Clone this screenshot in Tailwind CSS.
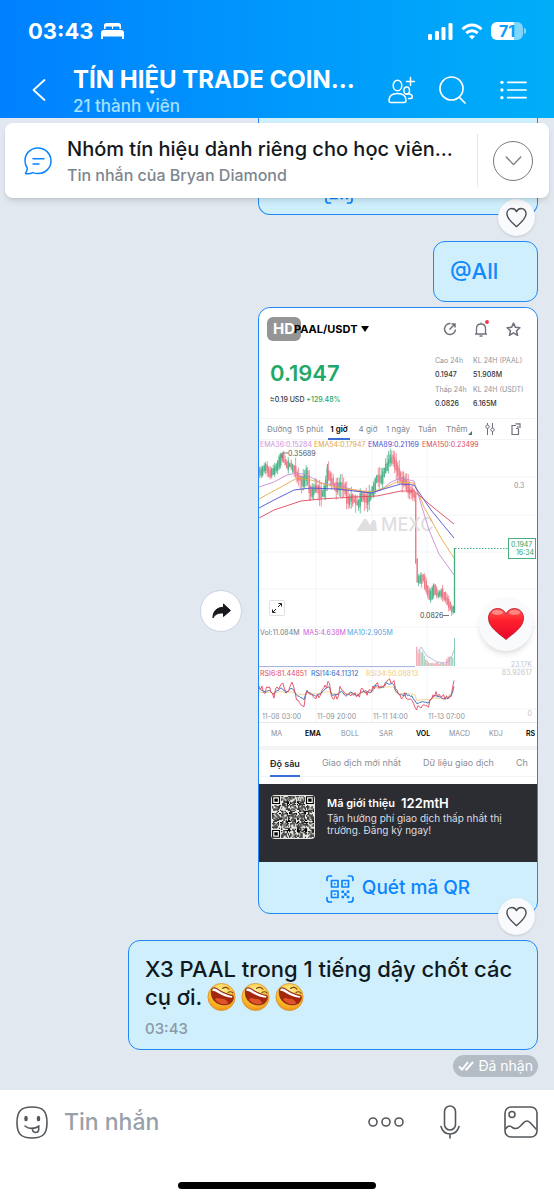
<!DOCTYPE html>
<html lang="vi">

<head>
  <meta charset="UTF-8" />
  <meta name="viewport" content="width=device-width, initial-scale=1.0" />
  <title>TÍN HIỆU TRADE COIN</title>
  <script src="https://cdn.jsdelivr.net/npm/@tailwindcss/browser@4"></script>
  <style>
    * {
      font-family: Inter, Roboto, "Noto Sans", sans-serif;
    }
  </style>
</head>

<body class="min-h-screen flex flex-col bg-slate-200">
  <!-- shared symbols -->
  <svg width="0" height="0" class="absolute" aria-hidden="true">
    <defs>
      <radialGradient id="face" cx="50%" cy="30%" r="75%">
        <stop offset="0" stop-color="#fff3a0" />
        <stop offset="0.6" stop-color="#fdc02f" />
        <stop offset="1" stop-color="#ee8a12" />
      </radialGradient>
      <linearGradient id="love" x1="0" y1="0" x2="0" y2="1">
        <stop offset="0" stop-color="#ff5a4e" />
        <stop offset="0.4" stop-color="#ff1f2d" />
        <stop offset="1" stop-color="#e50a2c" />
      </linearGradient>
      <symbol id="laugh" viewBox="0 0 28 28">
        <circle cx="14" cy="14" r="13.6" fill="url(#face)" stroke="#d98a24" stroke-width="0.7" />
        <path d="M4.500 5.500C6.500 4 9 5 12.500 7.500C16.500 10 21 11.500 25.500 12.500C26.500 14.500 25.500 18.500 22.500 20.500C18 23 11.500 22 7.500 18.500C4 15.500 2.800 9 4.500 5.500z" fill="#a3260f" stroke="#7c2410" stroke-width="0.800" />
        <path d="M5 6C7 4.800 9 6 12.300 8.200C16.300 10.700 20.500 12.200 25 13.200L24.500 14.800C19.500 14.300 15 12.700 11.500 10.500C9 9 7 7.800 4.800 7.800z" fill="#fff" />
        <path d="M7.500 16.500C10 13.500 12.500 15.500 14 16C16 15 19.500 17.500 21 20C17 22.500 11 21 7.500 16.500z" fill="#e0522a" />
        <path d="M15 5.500c2.500-1.800 5-1.500 6.500.7M20.500 9.500c1.500-1.200 3.800-1 5 .6" fill="none" stroke="#7c4a12" stroke-width="1.100" stroke-linecap="round" />
      </symbol>
      <symbol id="heart" viewBox="0 0 24 24">
        <path d="M12 21.500C8 18 2 13.500 2 8.200C2 5 4.300 2.700 7.100 2.700c2.100 0 3.900 1.100 4.900 3.100c1-2 2.800-3.100 4.900-3.100C19.700 2.700 22 5 22 8.200C22 13.500 16 18 12 21.500z" fill="none" stroke="#4b5157" stroke-width="1.500" stroke-linejoin="round" />
      </symbol>
      <symbol id="scan" viewBox="0 0 28 28">
        <g fill="none" stroke="#0a84ff" stroke-width="1.700" stroke-linecap="round">
          <path d="M1 5.500V3.500Q1 1 3.500 1H5.500M22.500 1h2Q27 1 27 3.500V5.500M27 22.500v2q0 2.500-2.500 2.500H22.500M5.500 27H3.500Q1 27 1 24.500V22.500" />
          <path d="M5.500 5.500h6.500v6.500H5.500zM16 5.500h6.500v6.500H16zM5.500 16h6.500v6.500H5.500z" stroke-linejoin="round" />
        </g>
        <path d="M8 8h1.600v1.600H8zM18.500 8h1.600v1.600h-1.600zM8 18.500h1.600v1.600H8zM15.500 15.500h2.600v2.600h-2.600zM20.700 15.500h2.600v2.600h-2.600zM18.100 18.100h2.600v2.600h-2.600zM15.500 20.700h2.600v2.600h-2.600zM20.700 20.700h2.600v2.600h-2.600z" fill="#0a84ff" />
      </symbol>
    </defs>
  </svg>

  <header class="bg-linear-to-r from-[#0080ff] to-[#00aef8] text-white h-[118px] shrink-0">
    <div class="h-[62px] flex items-center justify-between pl-7 pr-7">
      <div class="flex items-center gap-2">
        <span class="text-[22px] font-bold">03:43</span>
        <svg width="23" height="16" viewBox="0 0 23 16" fill="#fff">
          <path d="M3 6V2.500Q3 0 5.500 0h12Q20 0 20 2.500V6h-1.500V4.500q0-1-1-1H13q-1 0-1 1V6h-1V4.500q0-1-1-1H5.500q-1 0-1 1V6z" />
          <path d="M0 16v-6q0-3 3-3h17q3 0 3 3v6h-2v-2.500H2V16z" />
        </svg>
      </div>
      <div class="flex items-center gap-2">
        <svg width="25" height="17" viewBox="0 0 25 17" fill="#fff">
          <rect x="0" y="11" width="4" height="6" rx="1.300" />
          <rect x="7" y="8" width="4" height="9" rx="1.300" />
          <rect x="13.500" y="4" width="4" height="13" rx="1.300" />
          <rect x="20.500" y="0" width="4" height="17" rx="1.300" />
        </svg>
        <svg width="22" height="17" viewBox="0 0 22 17" fill="none" stroke="#fff" stroke-width="3">
          <path d="M1.500 6.200C7 .5 15 .5 20.500 6.200" />
          <path d="M5.300 10.200c3.300-3.200 8.100-3.200 11.400 0" />
          <path d="M11 16.500l-3-3.200q3-2.200 6 0z" fill="#fff" stroke="none" />
        </svg>
        <div class="flex items-center gap-px">
          <div class="w-8 h-[18px] rounded-md bg-linear-to-r from-white from-71% to-white/50 to-71% text-[#0a9cfa] text-base leading-[18px] font-bold text-center">71</div>
          <div class="w-[2px] h-[6px] rounded-r bg-white/50"></div>
        </div>
      </div>
    </div>
    <div class="flex items-center pl-8 pr-[27px] h-[56px]">
      <button aria-label="Quay lại" class="w-[41px] shrink-0">
        <svg width="14" height="22" viewBox="0 0 14 22" fill="none" stroke="#fff" stroke-width="1.800" stroke-linecap="round" stroke-linejoin="round">
          <path d="M12.500 1L1.500 11l11 10" />
        </svg>
      </button>
      <div class="flex-1 min-w-0 pt-1">
        <h1 class="text-[24px] leading-7 font-bold whitespace-nowrap">TÍN HIỆU TRADE COIN...</h1>
        <p class="text-[17px] leading-6 font-medium text-[#a8e0ff]">21 thành viên</p>
      </div>
      <div class="flex items-center shrink-0">
        <button aria-label="Thêm thành viên" class="mr-6">
          <svg width="27" height="28" viewBox="0 0 27 28" fill="none" stroke="#fff" stroke-width="1.500" stroke-linecap="round" stroke-linejoin="round">
            <ellipse cx="9.500" cy="9.500" rx="4.300" ry="5.300" />
            <path d="M1 24.500c0-5 3.500-7 8.500-7s8.500 2 8.500 7q0 2-2 2H3q-2 0-2-2z" />
            <ellipse cx="18.700" cy="14.500" rx="2.800" ry="3.600" />
            <path d="M20.500 22.500h2.300q1.500 0 1.500-1.500c0-1.800-1.500-3-4-3h-2.500M22.500 1.500v8M18.500 5.500h8" />
          </svg>
        </button>
        <button aria-label="Tìm kiếm" class="mr-[34px]">
          <svg width="27" height="28" viewBox="0 0 27 28" fill="none" stroke="#fff" stroke-width="1.700" stroke-linecap="round">
            <circle cx="12.500" cy="12.500" r="11.500" />
            <path d="M20.500 21.500l5.500 5.500" />
          </svg>
        </button>
        <button aria-label="Tùy chọn">
          <svg width="27" height="22" viewBox="0 0 28 22" fill="#fff">
            <circle cx="2" cy="3" r="1.700" /><circle cx="2" cy="11" r="1.700" /><circle cx="2" cy="19" r="1.700" />
            <path d="M8 3h19M8 11h19M8 19h19" stroke="#fff" stroke-width="1.800" stroke-linecap="round" />
          </svg>
        </button>
      </div>
    </div>
  </header>

  <main class="relative flex-1 flex flex-col items-end pr-4 overflow-hidden">
    <!-- pinned message -->
    <div class="absolute z-10 top-[5px] inset-x-[5px] h-[75px] bg-white rounded-lg shadow-md flex items-center pl-[19px] pr-4">
      <svg width="28" height="28" viewBox="0 0 28 28" fill="none" stroke="#0a84ff" stroke-width="1.500" stroke-linecap="round" stroke-linejoin="round" class="shrink-0">
        <path d="M14 1C6.500 1 1 6.500 1 13.500c0 3 .8 5.500 2.200 7.500c.3 2-.7 3.800-1.700 5.500c2.500.5 5 .3 7-.9C10 26 12 26.500 14 26.500c7.300 0 13-5.500 13-12.500S21.500 1 14 1z" />
        <path d="M9 11.800h11M9 17h6" />
      </svg>
      <div class="flex-1 min-w-0 ml-[15px]">
        <p class="text-[20px] leading-7 font-medium text-[#14181c] whitespace-nowrap">Nhóm tín hiệu dành riêng cho học viên...</p>
        <p class="text-base leading-6 font-medium text-[#7d868f]">Tin nhắn của Bryan Diamond</p>
      </div>
      <div class="w-px h-[53px] bg-slate-200 mr-[15px]"></div>
      <button aria-label="Mở rộng" class="size-10 rounded-full border border-[#777b80] flex items-center justify-center">
        <svg width="17" height="10" viewBox="0 0 18 11" fill="none" stroke="#777b80" stroke-width="1.500" stroke-linecap="round" stroke-linejoin="round">
          <path d="M1 1l8 8.500L17 1" />
        </svg>
      </button>
    </div>

    <!-- previous photo, mostly scrolled away -->
    <div class="relative w-[280px] h-[97px] border border-t-0 border-[#2088f5] rounded-b-xl bg-[#cfeffd] flex items-end pl-[66px] pb-[10px]">
      <svg width="28" height="28"><use href="#scan" /></svg>
      <button aria-label="Thích" class="absolute right-[2px] -bottom-[22px] size-[37px] rounded-full bg-slate-50 shadow flex items-center justify-center">
        <svg width="23" height="23"><use href="#heart" /></svg>
      </button>
    </div>

    <div class="mt-[26px] w-[105px] h-[61px] border border-[#2088f5] rounded-xl bg-[#cfeffd] flex items-center pl-4">
      <a href="#" class="text-[22px] font-medium text-[#1489fa]">@All</a>
    </div>

    <div class="mt-[5px] flex items-center gap-4">
      <button aria-label="Chia sẻ" class="size-[42px] rounded-full bg-white border border-slate-300 flex items-center justify-center">
        <svg width="19" height="16" viewBox="0 0 19 16" fill="#17191c" stroke="#17191c" stroke-width="1" stroke-linejoin="round">
          <path d="M11.500 1L18.500 7.500L11.500 13.500V10C6.500 9.800 3 11 1 15C.8 8.500 4.500 4.500 11.500 4.300z" />
        </svg>
      </button>

      <article class="relative w-[280px] border border-[#2088f5] rounded-xl bg-[#cfeffd]">
        <div class="bg-white rounded-t-xl overflow-hidden">
          <div class="h-[42px] flex items-center pl-2 pr-4">
            <span class="w-[34px] h-6 rounded-md bg-[#959595] text-white text-[15px] leading-6 font-bold pl-[6px] mr-[-7px]">HD</span>
            <span class="relative text-[11px] font-bold text-black">PAAL/USDT</span>
            <svg width="8" height="6" viewBox="0 0 8 6" class="ml-1"><path d="M0 0h8L4 6z" /></svg>
            <div class="flex-1"></div>
            <div class="flex items-center gap-[17px]">
              <svg width="14" height="14" viewBox="0 0 14 14" fill="none" stroke="#6d7179" stroke-width="1.500">
                <path d="M7.500 1.500A5.500 5.500 0 1 0 12.500 7.500M6.500 7.500l5-5M8.500 2h3.500v3.500" />
              </svg>
              <svg width="15" height="18" viewBox="0 0 15 18" fill="none" stroke="#6d7179" stroke-width="1.300">
                <path d="M1 14h12M2.500 14V8.500C2.500 5.500 4.500 4 7 4s4.500 1.500 4.500 4.500V14M5.500 16h3M7 4V2.500" />
                <circle cx="13" cy="2" r="1.900" fill="#f5304a" stroke="none" />
              </svg>
              <svg width="15" height="15" viewBox="0 0 14 14" fill="none" stroke="#6d7179" stroke-width="1.400" stroke-linejoin="round">
                <path d="M7 1l1.800 4 4.200.4-3.200 2.800 1 4.300L7 10.200l-3.800 2.300 1-4.300L1 5.400 5.200 5z" />
              </svg>
            </div>
          </div>

          <div class="h-[68px] flex justify-between pl-[11px] pr-[10px] pt-1">
            <div>
              <p class="text-[22px] leading-[39px] font-semibold text-[#1fa866]">0.1947</p>
              <p class="text-[7px] leading-[14px] font-medium text-[#33363b]">≈0.19 USD <span class="text-[#1fa866]">+129.48%</span></p>
            </div>
            <div class="grid grid-cols-[38px_54px] content-start text-[7px] whitespace-nowrap text-[#303338]">
              <span class="leading-[14px] text-[#8e929a]">Cao 24h</span><span class="leading-[14px] text-[#8e929a]">KL 24H (PAAL)</span>
              <span class="leading-[14px] font-medium">0.1947</span><span class="leading-[14px] font-medium">51.908M</span>
              <span class="leading-[16px] text-[#8e929a]">Thấp 24h</span><span class="leading-[16px] text-[#8e929a]">KL 24H (USDT)</span>
              <span class="leading-[12px] font-medium">0.0826</span><span class="leading-[12px] font-medium">6.165M</span>
            </div>
          </div>

          <div class="h-[22px] border-y border-gray-100 flex items-center text-[8px] text-[#82868e] whitespace-nowrap pl-2 pr-4">
            <span class="w-[29px]">Đường</span>
            <span class="w-8">15 phút</span>
            <span class="w-[22px] h-[22px] leading-[22px] border-b-2 border-[#3b6fd6] text-center font-semibold text-black">1 giờ</span>
            <span class="w-[36px] text-center">4 giờ</span>
            <span class="w-8">1 ngày</span>
            <span class="w-[28px]">Tuần</span>
            <span>Thêm</span>
            <svg width="4" height="4" viewBox="0 0 4 4" class="mt-2"><path d="M4 0v4H0z" fill="#52786b" /></svg>
            <div class="flex-1"></div>
            <svg width="10" height="12" viewBox="0 0 10 12" fill="none" stroke="#6d7179" stroke-width="1" class="mr-4">
              <path d="M2.500 0v2M2.500 5.500V12M7.500 0v5M7.500 8.500V12" /><circle cx="2.500" cy="3.700" r="1.700" /><circle cx="7.500" cy="6.700" r="1.700" />
            </svg>
            <svg width="10" height="12" viewBox="0 0 10 12" fill="none" stroke="#6d7179" stroke-width="1.200">
              <path d="M5 2.500H1v9h6.500V6M4.500 .8H9V5M7 3v2.500H5" />
            </svg>
          </div>

          <svg id="chart" viewBox="0 0 278 282" class="block w-full h-[282px]">
            <path d="M57 0v282M113 0v282M168 0v270M0 37h278M0 75h278M0 112h278M0 149h278M0 187h278M0 228h278M0 269h278" stroke="#f3f4f6" fill="none" />
            <g id="candles"></g>
            <g fill="#dcdcde" opacity="0.900">
              <path d="M98 90L105 79Q107 78 108 80L111 85L114 80Q116 79 117 82L118 91H99Q97 91 98 90z" />
              <text x="122" y="91" font-size="18" font-weight="500">MEXC</text>
            </g>
            <g fill="none" stroke-width="0.900">
              <path d="M0 47L15 42L28 35L38 33L48 35L62 43L78 45L95 50L112 53L122 50L132 42L142 38L155 41L170 90L180 114L195 135" stroke="#c98bd6" />
              <path d="M0 59L22 47L38 38L52 40L65 44L82 48L112 52L125 48L138 42L155 43L165 67L182 98L195 118" stroke="#e6a94a" />
              <path d="M0 68L15 60L35 50L52 48L78 49L112 53L128 48L142 44L155 45L172 70L195 98" stroke="#4b52d3" />
              <path d="M0 78L15 70L42 61L62 59L95 57L118 56L142 51L155 51L175 68L195 84" stroke="#dc4a5c" />
            </g>
            <path d="M195.500 108v65" stroke="#46ae80" stroke-width="1.300" />
            <path d="M196 108.500h54" stroke="#46ae80" stroke-dasharray="1.500 1.500" />
            <path d="M23 18v-5h6M184 175.500h6" stroke="#555" stroke-width="0.800" fill="none" />
            <rect x="249.500" y="98.500" width="27" height="20" fill="#fff" stroke="#46ae80" />
            <g font-size="7" fill="#2fa56f">
              <text x="252" y="107">0.1947</text>
              <text x="257" y="115">16:34</text>
            </g>
            <rect x="10.500" y="160.500" width="15" height="15" rx="1" fill="#fff" stroke="#dcdfe3" />
            <path d="M19 167l3-3M19.500 163.500H22.500V166.500M17 169l-3 3M13.500 169.500V172.500H16.500" stroke="#222" fill="none" />
            <g font-size="7">
              <text x="1" y="7" fill="#d092dc">EMA36:0.15284</text>
              <text x="55" y="7" fill="#e2a646">EMA54:0.17947</text>
              <text x="109" y="7" fill="#4b52d3">EMA89:0.21169</text>
              <text x="163" y="7" fill="#dc4a5c">EMA150:0.23499</text>
              <text x="1" y="195" fill="#777b82">Vol:11.084M</text>
              <text x="44" y="195" fill="#cc5fd0">MA5:4.638M</text>
              <text x="88" y="195" fill="#58a4dc">MA10:2.905M</text>
              <text x="1" y="236" fill="#e4485b">RSI6:81.44851</text>
              <text x="52" y="236" fill="#2f66bb">RSI14:64.11312</text>
              <text x="107" y="236" fill="#f0cb7e">RSI34:50.08813</text>
            </g>
            <g font-size="7" fill="#8f939a">
              <text x="29" y="16" fill="#54575c">0.35689</text>
              <text x="161" y="178" fill="#44474c">0.0826</text>
              <text x="255" y="48">0.3</text>
              <text x="3" y="279">11-08 03:00</text>
              <text x="58" y="279">11-09 20:00</text>
              <text x="114" y="279">11-11 14:00</text>
              <text x="169" y="279">11-13 07:00</text>
              <g fill="#c3c6ca" text-anchor="end">
                <text x="273" y="227">23.17K</text>
                <text x="273" y="235">83.92617</text>
                <text x="273" y="276">0</text>
              </g>
            </g>
            <path d="M0 226.500h156" stroke="#a9b5e0" />
            <g id="volume"></g>
            <g fill="none" stroke-width="0.900" stroke-linejoin="round">
              <path id="rsi34" stroke="#f2cf86" />
              <path id="rsi14" stroke="#2f66bb" />
              <path id="rsi6" stroke="#e4485b" />
            </g>
          </svg>

          <div class="h-6 border-t border-gray-200 flex items-center text-[7px] text-[#8a8e95] pl-3 whitespace-nowrap">
            <span class="w-[34px]">MA</span>
            <span class="w-[36px] font-semibold text-black">EMA</span>
            <span class="w-[38px]">BOLL</span>
            <span class="w-[37px]">SAR</span>
            <span class="w-[33px] font-semibold text-black">VOL</span>
            <span class="w-[40px]">MACD</span>
            <span class="w-[37px]">KDJ</span>
            <span class="font-semibold text-black">RS</span>
          </div>
          <div class="h-1 bg-gray-100"></div>
          <div class="h-[27px] flex items-center gap-[22px] text-[9px] text-[#8a8e95] whitespace-nowrap pl-[11px] border-b border-gray-100">
            <span class="h-[27px] leading-[27px] border-b-2 border-[#3b6fd6] font-semibold text-[#26292e]">Độ sâu</span>
            <span>Giao dịch mới nhất</span>
            <span>Dữ liệu giao dịch</span>
            <span>Ch</span>
          </div>
          <div class="h-[7px]"></div>

          <div class="h-[78px] bg-[#2b2d33] text-white flex pt-[11px] pl-3">
            <svg id="qr" width="44" height="44" viewBox="-1 -1 39 39" class="rounded-sm bg-[#e6e6e2] shrink-0"></svg>
            <div class="ml-3 text-[10px] leading-3 text-[#dcdde0]">
              <p class="h-[17px] leading-[17px] flex items-center gap-[6px] text-white font-semibold"><span class="text-[11px]">Mã giới thiệu</span><span class="text-[13px]">122mtH</span></p>
              <p>Tận hưởng phí giao dịch thấp nhất thị<br />trường. Đăng ký ngay!</p>
            </div>
          </div>
        </div>
        <a href="#" class="h-[51px] pt-[2px] flex items-center justify-center gap-2 text-[19px] font-medium text-[#0a84ff]">
          <svg width="28" height="28"><use href="#scan" /></svg>
          Quét mã QR
        </a>
        <button aria-label="Đã thích" class="absolute right-1 top-[289px] size-[54px] rounded-full bg-slate-50 shadow-md flex items-center justify-center">
          <svg width="36" height="32" viewBox="0 0 36 32">
            <path d="M18 31.500C11 25.500 .5 19.500 .5 10C.5 4.500 4.500 .5 9.500 .5C13.500 .5 16.500 2.500 18 6C19.500 2.500 22.500 .5 26.500 .5C31.500 .5 35.500 4.500 35.500 10C35.500 19.500 25 25.500 18 31.500z" fill="url(#love)" stroke="#b5122a" stroke-width="0.800" />
            <ellipse cx="9.500" cy="4.500" rx="5.500" ry="2.600" fill="#fff" opacity="0.350" />
            <ellipse cx="26.500" cy="4.500" rx="5.500" ry="2.600" fill="#fff" opacity="0.350" />
          </svg>
        </button>
        <button aria-label="Thích" class="absolute right-[2px] -bottom-[22px] size-[37px] rounded-full bg-slate-50 shadow flex items-center justify-center">
          <svg width="23" height="23"><use href="#heart" /></svg>
        </button>
      </article>
    </div>

    <div class="mt-[26px] w-[410px] h-[110px] border border-[#2088f5] rounded-xl bg-[#cfeffd] pl-4 pr-2 pt-[14px]">
      <p class="text-[22px] leading-7 font-medium text-[#101820]">X3 PAAL trong 1 tiếng dậy chốt các<br />
        <span class="flex items-center gap-[5px]">cụ ơi.
          <svg width="29" height="28"><use href="#laugh" /></svg>
          <svg width="29" height="28"><use href="#laugh" /></svg>
          <svg width="29" height="28"><use href="#laugh" /></svg>
        </span>
      </p>
      <p class="mt-[6px] text-[15px] leading-6 font-medium text-[#8b9aa6]">03:43</p>
    </div>

    <div class="mt-[5px] mb-[13px] h-[22px] px-[5px] rounded-full bg-[#b4bdc6] text-white text-sm flex items-center gap-1">
      <svg width="16" height="10" viewBox="0 0 16 10" fill="none" stroke="#fff" stroke-width="2">
        <path d="M1 5.500l3 3L10 1M7.500 7.500l1 1L15 1" />
      </svg>
      Đã nhận
    </div>
  </main>

  <footer class="bg-white h-[110px] shrink-0">
    <div class="h-16 flex items-center pl-4 pr-4">
      <button aria-label="Nhãn dán" class="shrink-0">
        <svg width="32" height="33" viewBox="0 0 32 33" fill="none" stroke="#54585c" stroke-width="1.600" stroke-linecap="round" stroke-linejoin="round">
          <path d="M16 1C5 1 1 5 1 16.500S5 32 16 32s15-4 15-15.500S27 1 16 1z" />
          <path d="M9 20c3.500 3.200 9.500 3.200 14 0M16.500 22.500c0 2 1 4 3.200 4s3-1.500 3-3.500v-2.800" />
          <ellipse cx="10" cy="12.500" rx="1" ry="2" fill="#54585c" /><ellipse cx="22.500" cy="12.500" rx="1" ry="2" fill="#54585c" />
        </svg>
      </button>
      <input type="text" aria-label="Tin nhắn" placeholder="Tin nhắn" class="flex-1 min-w-0 ml-4 text-[23px] font-medium outline-none placeholder:text-[#98a1a9]" />
      <button aria-label="Thêm" class="mr-9">
        <svg width="36" height="10" viewBox="0 0 36 10" fill="none" stroke="#54585c" stroke-width="1.600">
          <circle cx="5" cy="5" r="4" /><circle cx="18" cy="5" r="4" /><circle cx="31" cy="5" r="4" />
        </svg>
      </button>
      <button aria-label="Ghi âm" class="mr-11">
        <svg width="20" height="34" viewBox="0 0 20 34" fill="none" stroke="#54585c" stroke-width="1.600" stroke-linecap="round">
          <rect x="4.500" y="1" width="11" height="24" rx="5.500" />
          <path d="M1 21.500c1.500 5.500 4.500 7.500 9 7.500s7.500-2 9-7.500M10 29v4" />
        </svg>
      </button>
      <button aria-label="Hình ảnh">
        <svg width="34" height="32" viewBox="0 0 34 32" fill="none" stroke="#54585c" stroke-width="1.600" stroke-linejoin="round">
          <rect x="1" y="1" width="32" height="30" rx="6" />
          <circle cx="8" cy="8.500" r="3" />
          <path d="M1.500 23c3-4.500 5-3 7-1.500c3 2 5 1.500 8-1.500c3.500-4 6-7 9.500-3.500l6.500 7" />
        </svg>
      </button>
    </div>
    <div class="mx-auto mt-7 w-[198px] h-[7px] rounded-full bg-black"></div>
  </footer>

  <script>
    // small seeded generator so the chart is the same on every load
    let seed = 7;
    function rand() {
      seed = (seed * 16807) % 2147483647;
      return seed / 2147483647;
    }

    const price = [
      [0, 33], [8, 28], [12, 35], [18, 27], [23, 17], [28, 25], [35, 27], [38, 37], [45, 42], [48, 33], [52, 53],
      [58, 48], [63, 55], [67, 47], [69, 32], [73, 42], [78, 48], [82, 45], [87, 50], [89, 62], [93, 58], [100, 65],
      [103, 55], [108, 60], [115, 50], [118, 37], [123, 40], [128, 25], [133, 18], [138, 27], [142, 40], [147, 42],
      [150, 50], [153, 52], [156, 57], [158, 142], [160, 138], [165, 140], [168, 150], [172, 158], [175, 147],
      [179, 155], [183, 153], [187, 158], [191, 168], [194, 171],
    ];
    const rsi = [
      [0, 245], [5, 252], [10, 247], [15, 255], [22, 242], [27, 252], [33, 245], [38, 258], [45, 265], [48, 250],
      [57, 258], [62, 253], [70, 242], [73, 257], [78, 258], [82, 247], [87, 258], [92, 252], [98, 258], [103, 250],
      [110, 253], [115, 245], [123, 247], [128, 239], [134, 241], [138, 253], [143, 258], [147, 255], [153, 260],
      [157, 268], [165, 263], [170, 265], [175, 253], [185, 258], [192, 260], [195, 240],
    ];

    function at(points, x) {
      for (let i = 1; i < points.length; i++) {
        const [x0, y0] = points[i - 1];
        const [x1, y1] = points[i];
        if (x <= x1) return y0 + ((y1 - y0) * (x - x0)) / (x1 - x0);
      }
      return points[points.length - 1][1];
    }

    let candles = "";
    for (let x = 0; x < 195; x += 1.5) {
      const open = at(price, x);
      const close = at(price, x + 1.5);
      const up = close < open + (rand() - 0.5) * 3;
      const color = up ? "#4fb58c" : "#ee7c8b";
      const top = Math.min(open, close) - 1 - rand() * 4;
      const bottom = Math.max(open, close) + 1 + rand() * 4;
      candles += `<rect x="${x}" y="${top}" width="1.400" height="${bottom - top}" fill="${color}" />`;
      const wick = x > 35 && x < 156 ? 9 : 4;
      const above = rand() * wick;
      candles += `<rect x="${x + 0.3}" y="${top - above}" width="0.800" height="${bottom - top + above + rand() * wick}" fill="${color}" />`;
    }
    // the one tall spike
    candles += `<rect x="68" y="24" width="1" height="20" fill="#4fb58c" />`;
    document.getElementById("candles").innerHTML = candles;

    let volume = "";
    for (let x = 157; x < 194; x += 1.5) {
      const h = (x < 168 ? 22 - (x - 157) * 1.2 : x > 186 ? 10 : 4) * (0.5 + rand() * 0.5);
      volume += `<rect x="${x}" y="${226 - h}" width="1.400" height="${h}" fill="${rand() > 0.5 ? "#a8d8c3" : "#f3b1ba"}" />`;
    }
    volume += `<rect x="195" y="198" width="1" height="28" fill="#8fcdb0" />`;
    volume += `<path d="M158 213L162 207L168 216L178 222L188 223L193 216L195 210" fill="none" stroke="#b7a6de" stroke-width="0.800" />`;
    document.getElementById("volume").innerHTML = volume;

    // slower lines are flattened copies of the fast one
    function rsiPath(k) {
      let d = "";
      for (let x = 0; x <= 195; x += 1.5) {
        const base = x > 156 && x < 190 ? 259 : x > 115 && x < 136 ? 248 : 253;
        const y = base + (at(rsi, x) - base) * k + (rand() - 0.5) * 7 * k * k;
        d += (d ? "L" : "M") + x + " " + y.toFixed(1);
      }
      return d;
    }
    document.getElementById("rsi34").setAttribute("d", rsiPath(0.15));
    document.getElementById("rsi14").setAttribute("d", rsiPath(0.55));
    document.getElementById("rsi6").setAttribute("d", rsiPath(1));

    const n = 37;
    let cells = "";
    function finder(x, y) {
      return `<path d="M${x} ${y}h7v7h-7z" /><path d="M${x + 1} ${y + 1}h5v5h-5z" fill="#fff" /><path d="M${x + 2} ${y + 2}h3v3h-3z" />`;
    }
    for (let y = 0; y < n; y++) {
      for (let x = 0; x < n; x++) {
        const corner = (x < 8 && y < 8) || (x > n - 9 && y < 8) || (x < 8 && y > n - 9);
        if (!corner && rand() > 0.5) cells += `<path d="M${x} ${y}h1v1h-1z" />`;
      }
    }
    cells += finder(0, 0) + finder(n - 7, 0) + finder(0, n - 7);
    document.getElementById("qr").innerHTML = cells;
  </script>
</body>

</html>
